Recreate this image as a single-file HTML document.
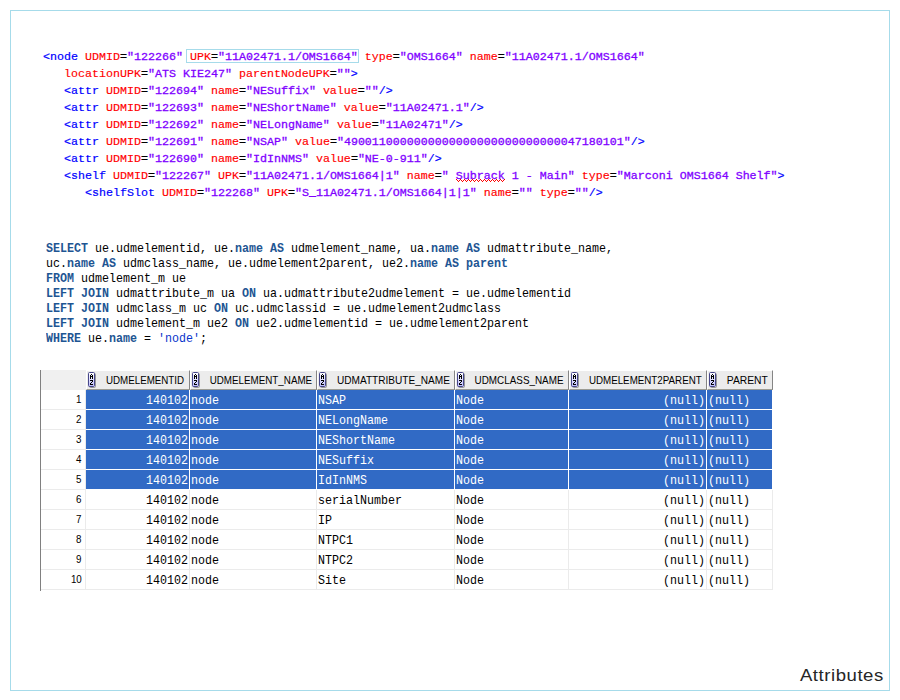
<!DOCTYPE html>
<html><head><meta charset="utf-8"><title>Attributes</title>
<style>
html,body{margin:0;padding:0;background:#fff;}
body{width:900px;height:700px;position:relative;overflow:hidden;font-family:"Liberation Sans",sans-serif;}
.frame{position:absolute;left:10px;top:10px;width:878px;height:679px;border:1px solid #a6dbea;}
.xl{position:absolute;white-space:pre;font-family:"Liberation Mono",monospace;font-size:11.6667px;line-height:17px;height:17px;color:#000;}
.xl .t{color:#0000ff;-webkit-text-stroke:0.2px #0000ff;}
.xl .a{color:#ff0000;-webkit-text-stroke:0.15px #ff0000;}
.xl .e{color:#000;-webkit-text-stroke:0.3px #000;}
.xl .v{color:#8000ff;-webkit-text-stroke:0.3px #8000ff;}
.xbox{position:absolute;left:186px;top:49px;width:171px;height:12px;border:1px solid #a6dbea;}
.sqg{position:absolute;left:456px;top:179px;width:49px;height:3px;}
.sl{position:absolute;left:45.5px;white-space:pre;font-family:"Liberation Mono",monospace;font-size:13.3px;line-height:15px;height:15px;color:#000;transform:scaleX(0.8772);transform-origin:0 0;}
.sl .k{color:#1e5593;font-weight:bold;}
.sl .s{color:#0a35cc;}
.h0{position:absolute;left:41px;top:370px;width:45px;height:20px;background:#f0f0f0;}
.hc{position:absolute;top:370px;height:20px;background:#ececec;box-sizing:border-box;border-top:1px solid #fff;border-left:1px solid #fff;border-right:1px solid #858585;border-bottom:1px solid #9c9c94;}
.ic{position:absolute;left:1px;top:1px;width:9px;height:17px;}
.ht{position:absolute;top:-1px;line-height:20px;font-size:11.5px;color:#000;white-space:pre;transform-origin:100% 50%;}
.tl{position:absolute;left:40px;top:370px;width:1px;height:221px;background:#808080;}
.row{position:absolute;left:41px;width:732px;height:19px;border-bottom:1px solid #ebebeb;background:#fff;}
.row .rn{position:absolute;left:0;top:0;width:44px;height:20px;border-right:1px solid #ebebeb;}
.row .rn span{position:absolute;right:3.4px;top:0;line-height:19px;font-size:11.5px;color:#000;transform:scaleX(0.85);transform-origin:100% 50%;}
.row .c{position:absolute;top:0;height:19px;box-sizing:border-box;border-right:1px solid #ebebeb;white-space:pre;color:#000;}
.row .c span{position:absolute;left:0.5px;top:0;line-height:21px;font-family:"Liberation Mono",monospace;font-size:13.3px;transform:scaleX(0.8772);transform-origin:0 50%;}
.row .c.r span{left:auto;right:1.5px;transform-origin:100% 50%;}
.row.sel .c{background:#316ac5;color:#fff;border-right-color:#fff;height:20px;border-bottom:1px solid #fff;}
.attr{position:absolute;right:16.5px;top:666px;font-size:17px;line-height:20px;letter-spacing:0.5px;color:#262626;transform:scaleX(1.092);transform-origin:100% 50%;white-space:pre;}
</style></head><body>
<svg width="0" height="0" style="position:absolute"><defs>
<linearGradient id="azg" x1="0" y1="0" x2="0" y2="1"><stop offset="0" stop-color="#ffffff"/><stop offset="0.45" stop-color="#e2e2ff"/><stop offset="1" stop-color="#bcbcf8"/></linearGradient>
</defs></svg>
<div class="frame"></div>
<div class="xbox"></div>
<svg class="sqg" width="49" height="3" viewBox="0 0 49 3" shape-rendering="crispEdges"><path d="M0 0h1v1h-1zM1 1h1v1h-1zM2 2h1v1h-1zM3 1h1v1h-1zM4 0h1v1h-1zM5 1h1v1h-1zM6 2h1v1h-1zM7 1h1v1h-1zM8 0h1v1h-1zM9 1h1v1h-1zM10 2h1v1h-1zM11 1h1v1h-1zM12 0h1v1h-1zM13 1h1v1h-1zM14 2h1v1h-1zM15 1h1v1h-1zM16 0h1v1h-1zM17 1h1v1h-1zM18 2h1v1h-1zM19 1h1v1h-1zM20 0h1v1h-1zM21 1h1v1h-1zM22 2h1v1h-1zM23 1h1v1h-1zM24 0h1v1h-1zM25 1h1v1h-1zM26 2h1v1h-1zM27 1h1v1h-1zM28 0h1v1h-1zM29 1h1v1h-1zM30 2h1v1h-1zM31 1h1v1h-1zM32 0h1v1h-1zM33 1h1v1h-1zM34 2h1v1h-1zM35 1h1v1h-1zM36 0h1v1h-1zM37 1h1v1h-1zM38 2h1v1h-1zM39 1h1v1h-1zM40 0h1v1h-1zM41 1h1v1h-1zM42 2h1v1h-1zM43 1h1v1h-1zM44 0h1v1h-1zM45 1h1v1h-1zM46 2h1v1h-1zM47 1h1v1h-1zM48 0h1v1h-1z" fill="#ff0000"/></svg>
<div class="xl" style="top:49px;left:43px"><span class="t">&lt;node</span> <span class="a">UDMID</span><span class="e">=</span><span class="v">"122266"</span> <span class="box"><span class="a">UPK</span><span class="e">=</span><span class="v">"11A02471.1/OMS1664"</span></span> <span class="a">type</span><span class="e">=</span><span class="v">"OMS1664"</span> <span class="a">name</span><span class="e">=</span><span class="v">"11A02471.1/OMS1664"</span></div>
<div class="xl" style="top:66px;left:64px"><span class="a">locationUPK</span><span class="e">=</span><span class="v">"ATS KIE247"</span> <span class="a">parentNodeUPK</span><span class="e">=</span><span class="v">""</span><span class="t">&gt;</span></div>
<div class="xl" style="top:83px;left:64px"><span class="t">&lt;attr</span> <span class="a">UDMID</span><span class="e">=</span><span class="v">"122694"</span> <span class="a">name</span><span class="e">=</span><span class="v">"NESuffix"</span> <span class="a">value</span><span class="e">=</span><span class="v">""</span><span class="t">/&gt;</span></div>
<div class="xl" style="top:100px;left:64px"><span class="t">&lt;attr</span> <span class="a">UDMID</span><span class="e">=</span><span class="v">"122693"</span> <span class="a">name</span><span class="e">=</span><span class="v">"NEShortName"</span> <span class="a">value</span><span class="e">=</span><span class="v">"11A02471.1"</span><span class="t">/&gt;</span></div>
<div class="xl" style="top:117px;left:64px"><span class="t">&lt;attr</span> <span class="a">UDMID</span><span class="e">=</span><span class="v">"122692"</span> <span class="a">name</span><span class="e">=</span><span class="v">"NELongName"</span> <span class="a">value</span><span class="e">=</span><span class="v">"11A02471"</span><span class="t">/&gt;</span></div>
<div class="xl" style="top:134px;left:64px"><span class="t">&lt;attr</span> <span class="a">UDMID</span><span class="e">=</span><span class="v">"122691"</span> <span class="a">name</span><span class="e">=</span><span class="v">"NSAP"</span> <span class="a">value</span><span class="e">=</span><span class="v">"4900110000000000000000000000000047180101"</span><span class="t">/&gt;</span></div>
<div class="xl" style="top:151px;left:64px"><span class="t">&lt;attr</span> <span class="a">UDMID</span><span class="e">=</span><span class="v">"122690"</span> <span class="a">name</span><span class="e">=</span><span class="v">"IdInNMS"</span> <span class="a">value</span><span class="e">=</span><span class="v">"NE-0-911"</span><span class="t">/&gt;</span></div>
<div class="xl" style="top:168px;left:64px"><span class="t">&lt;shelf</span> <span class="a">UDMID</span><span class="e">=</span><span class="v">"122267"</span> <span class="a">UPK</span><span class="e">=</span><span class="v">"11A02471.1/OMS1664|1"</span> <span class="a">name</span><span class="e">=</span><span class="v">" </span><span class="v sq">Subrack</span><span class="v"> 1 - Main"</span> <span class="a">type</span><span class="e">=</span><span class="v">"Marconi OMS1664 Shelf"</span><span class="t">&gt;</span></div>
<div class="xl" style="top:185px;left:85px"><span class="t">&lt;shelfSlot</span> <span class="a">UDMID</span><span class="e">=</span><span class="v">"122268"</span> <span class="a">UPK</span><span class="e">=</span><span class="v">"S_11A02471.1/OMS1664|1|1"</span> <span class="a">name</span><span class="e">=</span><span class="v">""</span> <span class="a">type</span><span class="e">=</span><span class="v">""</span><span class="t">/&gt;</span></div>

<div class="sl" style="top:241px"><span class="k">SELECT</span> ue.udmelementid, ue.<span class="k">name</span> <span class="k">AS</span> udmelement_name, ua.<span class="k">name</span> <span class="k">AS</span> udmattribute_name,</div>
<div class="sl" style="top:256px">uc.<span class="k">name</span> <span class="k">AS</span> udmclass_name, ue.udmelement2parent, ue2.<span class="k">name</span> <span class="k">AS</span> <span class="k">parent</span></div>
<div class="sl" style="top:271px"><span class="k">FROM</span> udmelement_m ue</div>
<div class="sl" style="top:286px"><span class="k">LEFT JOIN</span> udmattribute_m ua <span class="k">ON</span> ua.udmattribute2udmelement = ue.udmelementid</div>
<div class="sl" style="top:301px"><span class="k">LEFT JOIN</span> udmclass_m uc <span class="k">ON</span> uc.udmclassid = ue.udmelement2udmclass</div>
<div class="sl" style="top:316px"><span class="k">LEFT JOIN</span> udmelement_m ue2 <span class="k">ON</span> ue2.udmelementid = ue.udmelement2parent</div>
<div class="sl" style="top:331px"><span class="k">WHERE</span> ue.<span class="k">name</span> = <span class="s">'node'</span>;</div>

<div class="h0"></div>
<div class="hc" style="left:86px;width:104px"><svg class="ic" width="9" height="17" viewBox="0 0 9 17"><rect x="1.5" y="1.5" width="6" height="14" rx="1" fill="none" stroke="#8a8a8a" stroke-width="1" opacity="0.85"/><rect x="0.5" y="0.5" width="6" height="14" rx="1" fill="url(#azg)" stroke="#46468a" stroke-width="1"/><path d="M3 2h1v1h-1zM2 3h1v1h-1zM4 3h1v1h-1zM2 4h3v1h-3zM2 5h1v2h-1zM4 5h1v2h-1z" fill="#000" shape-rendering="crispEdges"/><path d="M2 8h3v1h-3zM4 9h1v1h-1zM3 10h1v1h-1zM2 11h1v1h-1zM2 12h3v1h-3z" fill="#000" shape-rendering="crispEdges"/></svg><span class="ht" style="right:4.8px;transform:scaleX(0.8478)">UDMELEMENTID</span></div>
<div class="hc" style="left:190px;width:127px"><svg class="ic" width="9" height="17" viewBox="0 0 9 17"><rect x="1.5" y="1.5" width="6" height="14" rx="1" fill="none" stroke="#8a8a8a" stroke-width="1" opacity="0.85"/><rect x="0.5" y="0.5" width="6" height="14" rx="1" fill="url(#azg)" stroke="#46468a" stroke-width="1"/><path d="M3 2h1v1h-1zM2 3h1v1h-1zM4 3h1v1h-1zM2 4h3v1h-3zM2 5h1v2h-1zM4 5h1v2h-1z" fill="#000" shape-rendering="crispEdges"/><path d="M2 8h3v1h-3zM4 9h1v1h-1zM3 10h1v1h-1zM2 11h1v1h-1zM2 12h3v1h-3z" fill="#000" shape-rendering="crispEdges"/></svg><span class="ht" style="right:3.8px;transform:scaleX(0.8526)">UDMELEMENT_NAME</span></div>
<div class="hc" style="left:317px;width:138px"><svg class="ic" width="9" height="17" viewBox="0 0 9 17"><rect x="1.5" y="1.5" width="6" height="14" rx="1" fill="none" stroke="#8a8a8a" stroke-width="1" opacity="0.85"/><rect x="0.5" y="0.5" width="6" height="14" rx="1" fill="url(#azg)" stroke="#46468a" stroke-width="1"/><path d="M3 2h1v1h-1zM2 3h1v1h-1zM4 3h1v1h-1zM2 4h3v1h-3zM2 5h1v2h-1zM4 5h1v2h-1z" fill="#000" shape-rendering="crispEdges"/><path d="M2 8h3v1h-3zM4 9h1v1h-1zM3 10h1v1h-1zM2 11h1v1h-1zM2 12h3v1h-3z" fill="#000" shape-rendering="crispEdges"/></svg><span class="ht" style="right:3.8px;transform:scaleX(0.8759)">UDMATTRIBUTE_NAME</span></div>
<div class="hc" style="left:455px;width:114px"><svg class="ic" width="9" height="17" viewBox="0 0 9 17"><rect x="1.5" y="1.5" width="6" height="14" rx="1" fill="none" stroke="#8a8a8a" stroke-width="1" opacity="0.85"/><rect x="0.5" y="0.5" width="6" height="14" rx="1" fill="url(#azg)" stroke="#46468a" stroke-width="1"/><path d="M3 2h1v1h-1zM2 3h1v1h-1zM4 3h1v1h-1zM2 4h3v1h-3zM2 5h1v2h-1zM4 5h1v2h-1z" fill="#000" shape-rendering="crispEdges"/><path d="M2 8h3v1h-3zM4 9h1v1h-1zM3 10h1v1h-1zM2 11h1v1h-1zM2 12h3v1h-3z" fill="#000" shape-rendering="crispEdges"/></svg><span class="ht" style="right:4.0px;transform:scaleX(0.8589)">UDMCLASS_NAME</span></div>
<div class="hc" style="left:569px;width:138px"><svg class="ic" width="9" height="17" viewBox="0 0 9 17"><rect x="1.5" y="1.5" width="6" height="14" rx="1" fill="none" stroke="#8a8a8a" stroke-width="1" opacity="0.85"/><rect x="0.5" y="0.5" width="6" height="14" rx="1" fill="url(#azg)" stroke="#46468a" stroke-width="1"/><path d="M3 2h1v1h-1zM2 3h1v1h-1zM4 3h1v1h-1zM2 4h3v1h-3zM2 5h1v2h-1zM4 5h1v2h-1z" fill="#000" shape-rendering="crispEdges"/><path d="M2 8h3v1h-3zM4 9h1v1h-1zM3 10h1v1h-1zM2 11h1v1h-1zM2 12h3v1h-3z" fill="#000" shape-rendering="crispEdges"/></svg><span class="ht" style="right:4.3px;transform:scaleX(0.8500)">UDMELEMENT2PARENT</span></div>
<div class="hc" style="left:707px;width:66px"><svg class="ic" width="9" height="17" viewBox="0 0 9 17"><rect x="1.5" y="1.5" width="6" height="14" rx="1" fill="none" stroke="#8a8a8a" stroke-width="1" opacity="0.85"/><rect x="0.5" y="0.5" width="6" height="14" rx="1" fill="url(#azg)" stroke="#46468a" stroke-width="1"/><path d="M3 2h1v1h-1zM2 3h1v1h-1zM4 3h1v1h-1zM2 4h3v1h-3zM2 5h1v2h-1zM4 5h1v2h-1z" fill="#000" shape-rendering="crispEdges"/><path d="M2 8h3v1h-3zM4 9h1v1h-1zM3 10h1v1h-1zM2 11h1v1h-1zM2 12h3v1h-3z" fill="#000" shape-rendering="crispEdges"/></svg><span class="ht" style="right:3.8px;transform:scaleX(0.8952)">PARENT</span></div>
<div class="row sel" style="top:390px"><div class="rn"><span>1</span></div><div class="c r" style="left:45px;width:104px"><span>140102</span></div><div class="c" style="left:149px;width:127px"><span>node</span></div><div class="c" style="left:276px;width:138px"><span>NSAP</span></div><div class="c" style="left:414px;width:114px"><span>Node</span></div><div class="c r" style="left:528px;width:138px"><span>(null)</span></div><div class="c" style="left:666px;width:66px"><span>(null)</span></div></div>
<div class="row sel" style="top:410px"><div class="rn"><span>2</span></div><div class="c r" style="left:45px;width:104px"><span>140102</span></div><div class="c" style="left:149px;width:127px"><span>node</span></div><div class="c" style="left:276px;width:138px"><span>NELongName</span></div><div class="c" style="left:414px;width:114px"><span>Node</span></div><div class="c r" style="left:528px;width:138px"><span>(null)</span></div><div class="c" style="left:666px;width:66px"><span>(null)</span></div></div>
<div class="row sel" style="top:430px"><div class="rn"><span>3</span></div><div class="c r" style="left:45px;width:104px"><span>140102</span></div><div class="c" style="left:149px;width:127px"><span>node</span></div><div class="c" style="left:276px;width:138px"><span>NEShortName</span></div><div class="c" style="left:414px;width:114px"><span>Node</span></div><div class="c r" style="left:528px;width:138px"><span>(null)</span></div><div class="c" style="left:666px;width:66px"><span>(null)</span></div></div>
<div class="row sel" style="top:450px"><div class="rn"><span>4</span></div><div class="c r" style="left:45px;width:104px"><span>140102</span></div><div class="c" style="left:149px;width:127px"><span>node</span></div><div class="c" style="left:276px;width:138px"><span>NESuffix</span></div><div class="c" style="left:414px;width:114px"><span>Node</span></div><div class="c r" style="left:528px;width:138px"><span>(null)</span></div><div class="c" style="left:666px;width:66px"><span>(null)</span></div></div>
<div class="row sel" style="top:470px"><div class="rn"><span>5</span></div><div class="c r" style="left:45px;width:104px"><span>140102</span></div><div class="c" style="left:149px;width:127px"><span>node</span></div><div class="c" style="left:276px;width:138px"><span>IdInNMS</span></div><div class="c" style="left:414px;width:114px"><span>Node</span></div><div class="c r" style="left:528px;width:138px"><span>(null)</span></div><div class="c" style="left:666px;width:66px"><span>(null)</span></div></div>
<div class="row" style="top:490px"><div class="rn"><span>6</span></div><div class="c r" style="left:45px;width:104px"><span>140102</span></div><div class="c" style="left:149px;width:127px"><span>node</span></div><div class="c" style="left:276px;width:138px"><span>serialNumber</span></div><div class="c" style="left:414px;width:114px"><span>Node</span></div><div class="c r" style="left:528px;width:138px"><span>(null)</span></div><div class="c" style="left:666px;width:66px"><span>(null)</span></div></div>
<div class="row" style="top:510px"><div class="rn"><span>7</span></div><div class="c r" style="left:45px;width:104px"><span>140102</span></div><div class="c" style="left:149px;width:127px"><span>node</span></div><div class="c" style="left:276px;width:138px"><span>IP</span></div><div class="c" style="left:414px;width:114px"><span>Node</span></div><div class="c r" style="left:528px;width:138px"><span>(null)</span></div><div class="c" style="left:666px;width:66px"><span>(null)</span></div></div>
<div class="row" style="top:530px"><div class="rn"><span>8</span></div><div class="c r" style="left:45px;width:104px"><span>140102</span></div><div class="c" style="left:149px;width:127px"><span>node</span></div><div class="c" style="left:276px;width:138px"><span>NTPC1</span></div><div class="c" style="left:414px;width:114px"><span>Node</span></div><div class="c r" style="left:528px;width:138px"><span>(null)</span></div><div class="c" style="left:666px;width:66px"><span>(null)</span></div></div>
<div class="row" style="top:550px"><div class="rn"><span>9</span></div><div class="c r" style="left:45px;width:104px"><span>140102</span></div><div class="c" style="left:149px;width:127px"><span>node</span></div><div class="c" style="left:276px;width:138px"><span>NTPC2</span></div><div class="c" style="left:414px;width:114px"><span>Node</span></div><div class="c r" style="left:528px;width:138px"><span>(null)</span></div><div class="c" style="left:666px;width:66px"><span>(null)</span></div></div>
<div class="row" style="top:570px"><div class="rn"><span>10</span></div><div class="c r" style="left:45px;width:104px"><span>140102</span></div><div class="c" style="left:149px;width:127px"><span>node</span></div><div class="c" style="left:276px;width:138px"><span>Site</span></div><div class="c" style="left:414px;width:114px"><span>Node</span></div><div class="c r" style="left:528px;width:138px"><span>(null)</span></div><div class="c" style="left:666px;width:66px"><span>(null)</span></div></div>

<div class="tl"></div>
<div class="attr">Attributes</div>
</body></html>
